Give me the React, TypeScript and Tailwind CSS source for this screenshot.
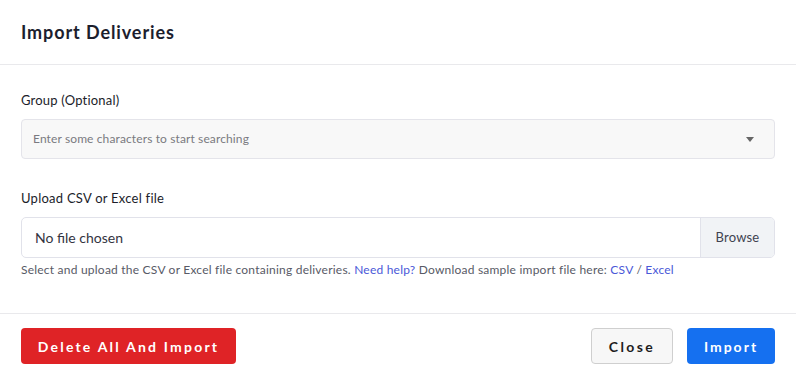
const FONT = { fontFamily: "Lato, 'Noto Sans', sans-serif" };

export default function App() {
  return (
    <div className="w-[796px] h-[375px] bg-white text-[#1b1d2a]" style={FONT}>
      {/* header */}
      <div className="h-[65px] px-[21px] flex items-center border-b border-[#e9e9ec]">
        <h1 className="text-[18px] font-bold tracking-[0.9px] text-[#1c1e2e]">Import Deliveries</h1>
      </div>

      {/* body */}
      <div className="px-[21px] pt-[27px] pb-[35px] border-b border-[#e9e9ec]">
        <label className="block text-[13px] leading-[16px] tracking-[0.2px] mb-[11px]">Group (Optional)</label>
        <div className="h-[40px] rounded-[4px] border border-[#e4e4ea] bg-[#f8f8f8] flex items-center justify-between pl-[11px] pr-[20px]">
          <span className="text-[12px] tracking-[0.12px] text-[#7a7a80]">Enter some characters to start searching</span>
          <span className="w-0 h-0 border-l-[4px] border-r-[4px] border-t-[5px] border-l-transparent border-r-transparent border-t-[#666]" />
        </div>

        <label className="block text-[13px] leading-[16px] tracking-[0.25px] mt-[31px] mb-[11px]">Upload CSV or Excel file</label>
        <div className="h-[41px] rounded-[5px] border border-[#e1e2ea] flex overflow-hidden">
          <div className="flex-1 flex items-center pl-[13px] text-[14px] text-[#33343f]">No file chosen</div>
          <div className="w-[74px] bg-[#f1f3f6] border-l border-[#e1e2ea] flex items-center justify-center text-[13px] tracking-[0.2px] text-[#404250]">
            Browse
          </div>
        </div>
        <p className="mt-[4px] text-[12px] leading-[16px] tracking-[0.22px] text-[#585a66]">
          Select and upload the CSV or Excel file containing deliveries.{" "}
          <a className="text-[#4a58d8]">Need help?</a> Download sample import file here:{" "}
          <a className="text-[#4a58d8]">CSV</a> / <a className="text-[#4a58d8]">Excel</a>
        </p>
      </div>

      {/* footer */}
      <div className="px-[21px] pt-[14px] flex items-center justify-between">
        <button className="h-[36px] w-[215px] rounded-[4px] bg-[#df2326] text-white text-[14px] font-bold tracking-[2.2px]">
          Delete All And Import
        </button>
        <div className="flex gap-[14px]">
          <button className="h-[36px] w-[82px] rounded-[4px] bg-[#f7f7f7] border border-[#cfcfcf] text-[#1d1d1d] text-[14px] font-bold tracking-[2.4px]">
            Close
          </button>
          <button className="h-[36px] w-[88px] rounded-[4px] bg-[#1570f0] text-white text-[14px] font-bold tracking-[2px]">
            Import
          </button>
        </div>
      </div>
    </div>
  );
}
